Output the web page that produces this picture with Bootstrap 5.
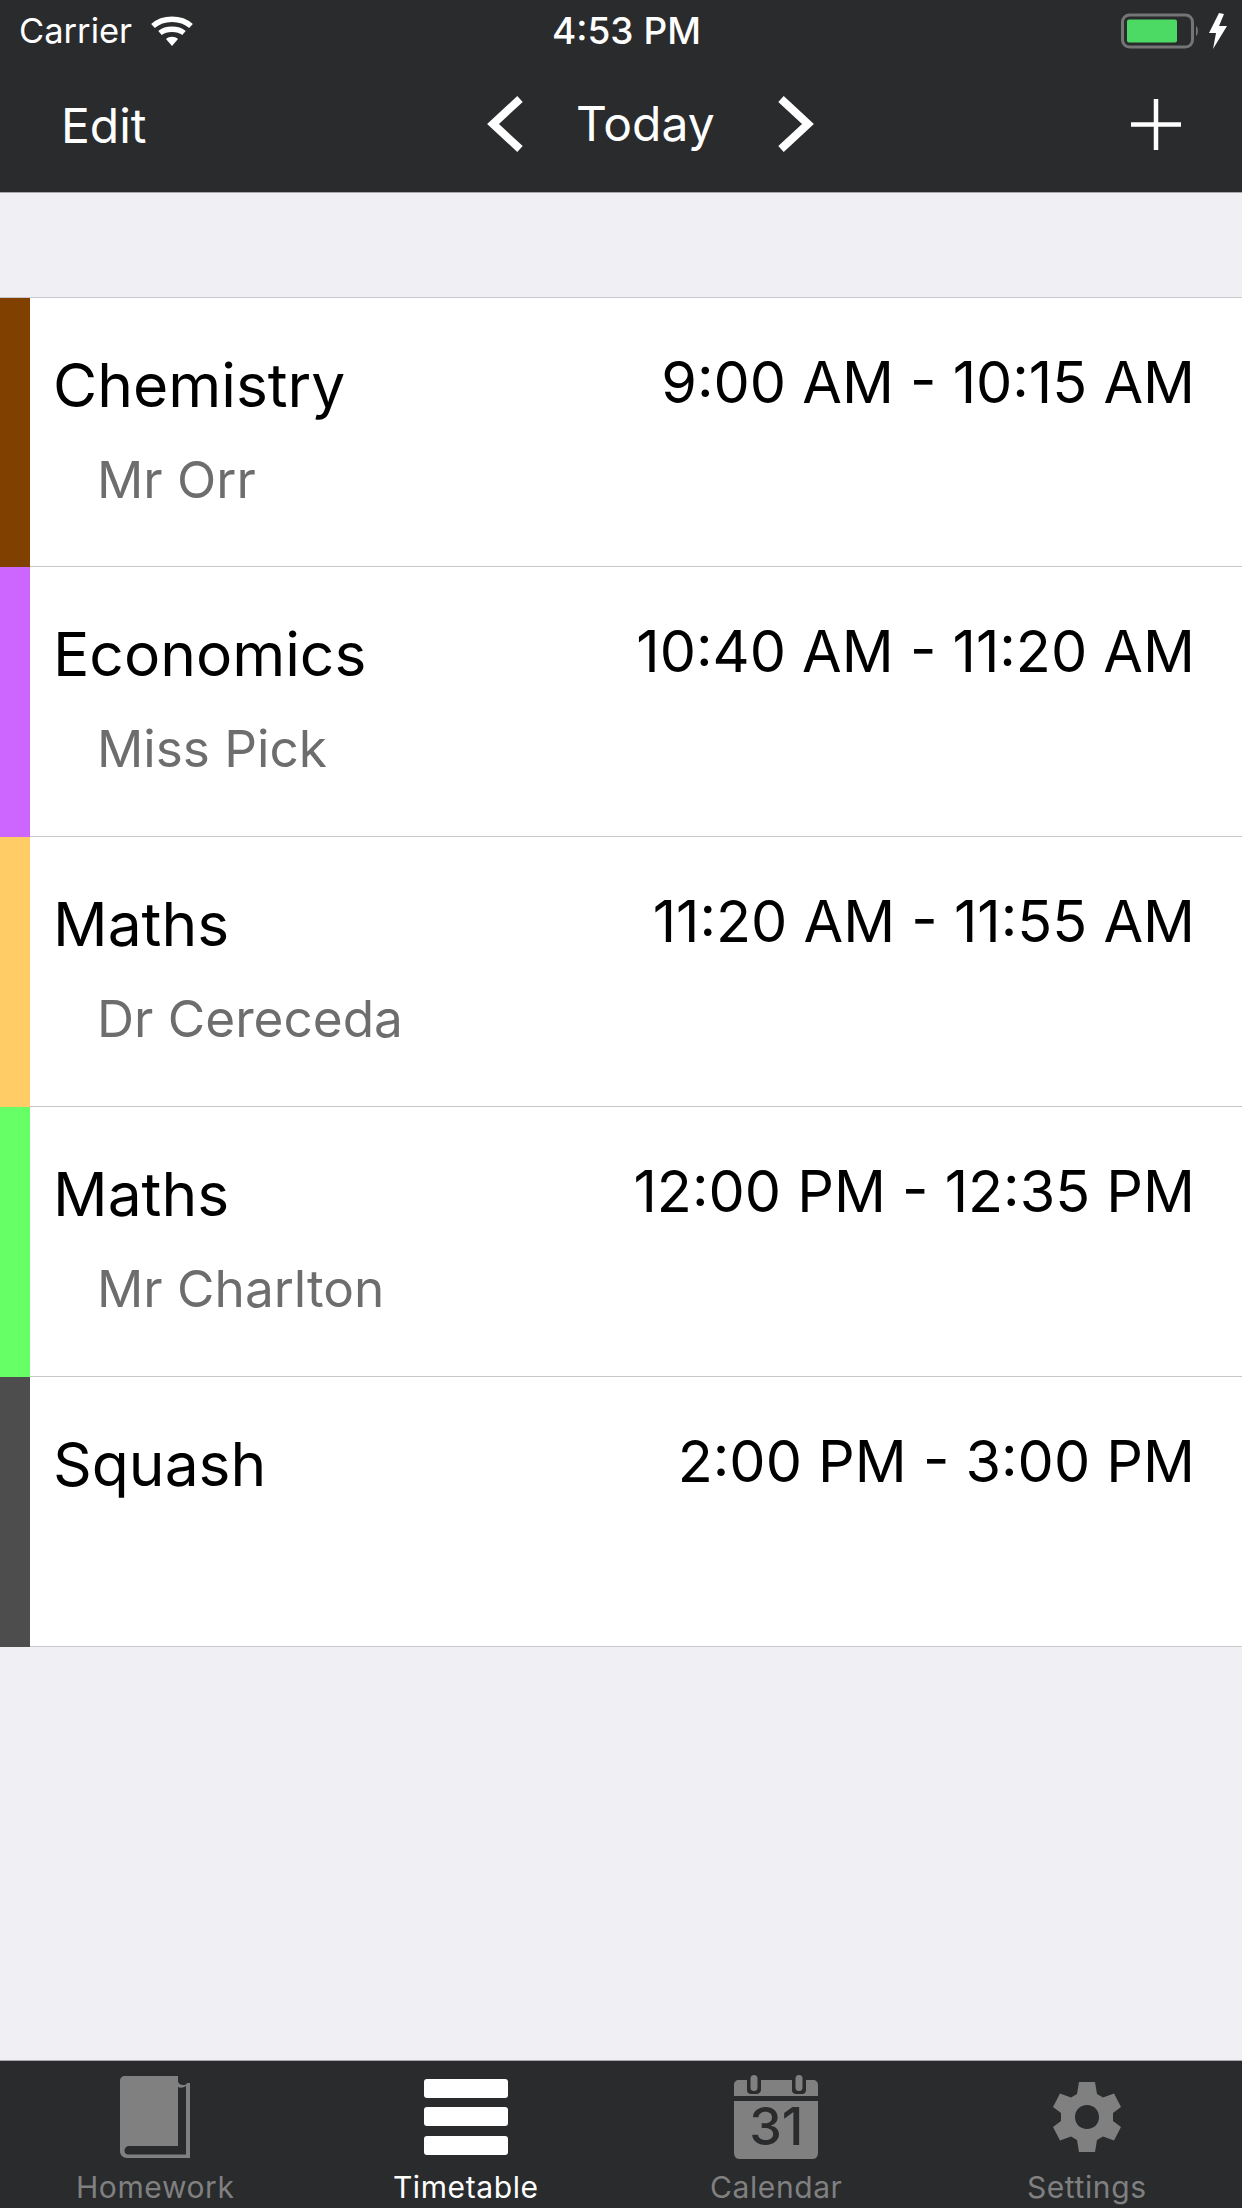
<!DOCTYPE html>
<html lang="en">
<head>
<meta charset="utf-8">
<title>Timetable</title>
<link href="https://cdn.jsdelivr.net/npm/bootstrap@5.3.0/dist/css/bootstrap.min.css" rel="stylesheet">
<style>
html, body { height: 100%; }
body { background: #efeff4; font-family: Inter, "Liberation Sans", sans-serif; }
.app-shell { height: 2208px; }
.top-bar { background: #2a2b2d; height: 193px; border-bottom: 1px solid #a9a9ad; color: #fff; }
.status-line { height: 62px; padding: 0 13px 0 19px; font-size: 34.5px; }
.carrier-text { width: 112px; margin-right: 20px; }
.clock-text { margin-left: 359px; font-size: 37px; font-weight: 500; width: 148px; white-space: nowrap; }
.nav-line { height: 130px; font-size: 48px; padding-bottom: 6px; }
.nav-text { margin-top: 4px; }
.edit-text { margin-left: 61px; width: 85px; }
.today-text { width: 133px; margin: 0 68px 0 52px; text-align: center; }
.prev-mark { margin-left: 341px; }
.plus-mark { margin-left: 317px; }
.gap-band { height: 104px; }
.day-list { --bs-list-group-bg: #fff; border-radius: 0; }
.day-list > .lesson-item { height: 270px; padding: 0; border-color: #c8c7cc; border-radius: 0; }
.day-list > .lesson-item:first-child { border-top-width: 1px; }
.day-list > .lesson-item:last-child { border-bottom-width: 1px; }
.stripe-bar { width: 30px; margin-bottom: -1px; flex-shrink: 0; }
.lesson-body { padding: 49px 47px 0 23px; }
.subject-name { font-size: 60.5px; line-height: 74px; color: #000; margin-top: 1px; }
.teacher-name { font-size: 51.300px; line-height: 60px; color: #6d6d6d; padding-left: 44px; margin-top: 27px; }
.time-range { font-size: 57.5px; line-height: 70px; color: #000; white-space: nowrap; }
.tab-strip { background: #2a2b2d; height: 148px; border-top: 1px solid #a9a9ad; }
.tab-entry { width: 25%; color: #808080; font-size: 30px; letter-spacing: .6px; height: 147px; padding-top: 4px; }
.tab-entry.is-active { color: #fff; }
.tab-glyph { height: 104px; }
.tab-caption { line-height: 36px; }
.date-number { position: absolute; left: 0; right: 0; bottom: 6px; text-align: center; font-size: 52px; line-height: 1; font-weight: 500; letter-spacing: 0; color: #2a2b2d; }
</style>
</head>
<body>
<div class="app-shell d-flex flex-column">
  <header class="top-bar flex-shrink-0">
    <div class="status-line d-flex align-items-center">
      <span class="carrier-text">Carrier</span>
      <svg width="42" height="30" viewBox="0 0 42 30"><g fill="none" stroke="#fff" stroke-width="5.5"><path d="M2 10C12 1 30 1 40 10"/><path d="M9 17C15 12 27 12 33 17"/></g><path d="M15 23C18 20 24 20 27 23L21 30Z" fill="#fff"/></svg>
      <span class="clock-text">4:53 PM</span>
      <svg class="ms-auto" width="108" height="36" viewBox="0 0 108 36">
        <rect x="1.5" y="2" width="70" height="32" rx="7" fill="none" stroke="#757575" stroke-width="3"/>
        <rect x="6" y="6.500" width="50" height="23" rx="2" fill="#4cd964"/>
        <path d="M75 13C77.500 14 77.500 22 75 23Z" fill="#757575"/>
        <path d="M98 0L88 20H95L92 36L106 13H98L103 1Z" fill="#fff"/>
      </svg>
    </div>
    <div class="nav-line d-flex align-items-center">
      <span class="nav-text edit-text">Edit</span>
      <svg class="prev-mark" width="37" height="56" viewBox="0 0 37 56"><path d="M33 3L6 28L33 53" fill="none" stroke="#fff" stroke-width="8"/></svg>
      <span class="nav-text today-text">Today</span>
      <svg width="37" height="56" viewBox="0 0 37 56"><path d="M4 3L31 28L4 53" fill="none" stroke="#fff" stroke-width="8"/></svg>
      <svg class="plus-mark" width="50" height="51" viewBox="0 0 50 51"><path d="M25 0V51M0 25.500H50" stroke="#fff" stroke-width="4.500"/></svg>
    </div>
  </header>
  <div class="gap-band flex-shrink-0"></div>
  <ul class="list-group list-group-flush day-list flex-shrink-0">
    <li class="list-group-item lesson-item d-flex">
      <div class="stripe-bar" style="background:#804000"></div>
      <div class="lesson-body d-flex flex-grow-1 justify-content-between">
        <div><div class="subject-name">Chemistry</div><div class="teacher-name">Mr Orr</div></div>
        <div class="time-range">9:00 AM - 10:15 AM</div>
      </div>
    </li>
    <li class="list-group-item lesson-item d-flex">
      <div class="stripe-bar" style="background:#cc66ff"></div>
      <div class="lesson-body d-flex flex-grow-1 justify-content-between">
        <div><div class="subject-name">Economics</div><div class="teacher-name">Miss Pick</div></div>
        <div class="time-range">10:40 AM - 11:20 AM</div>
      </div>
    </li>
    <li class="list-group-item lesson-item d-flex">
      <div class="stripe-bar" style="background:#ffcc66"></div>
      <div class="lesson-body d-flex flex-grow-1 justify-content-between">
        <div><div class="subject-name">Maths</div><div class="teacher-name">Dr Cereceda</div></div>
        <div class="time-range">11:20 AM - 11:55 AM</div>
      </div>
    </li>
    <li class="list-group-item lesson-item d-flex">
      <div class="stripe-bar" style="background:#66ff66"></div>
      <div class="lesson-body d-flex flex-grow-1 justify-content-between">
        <div><div class="subject-name">Maths</div><div class="teacher-name">Mr Charlton</div></div>
        <div class="time-range">12:00 PM - 12:35 PM</div>
      </div>
    </li>
    <li class="list-group-item lesson-item d-flex">
      <div class="stripe-bar" style="background:#4d4d4d"></div>
      <div class="lesson-body d-flex flex-grow-1 justify-content-between">
        <div><div class="subject-name">Squash</div></div>
        <div class="time-range">2:00 PM - 3:00 PM</div>
      </div>
    </li>
  </ul>
  <div class="flex-grow-1"></div>
  <nav class="tab-strip d-flex flex-shrink-0">
    <div class="tab-entry d-flex flex-column align-items-center">
      <div class="tab-glyph d-flex align-items-center">
        <svg width="70" height="82" viewBox="0 0 70 82"><path d="M5 0H58V5C58 10 67 10 67 7H70V82H7C3 82 0 79 0 75V5C0 2 2 0 5 0ZM58 11V70H9C4 70 2.500 78 8 78.500H66V10C63 12 60 12 58 11Z" fill="#808080" fill-rule="evenodd"/></svg>
      </div>
      <div class="tab-caption">Homework</div>
    </div>
    <div class="tab-entry is-active d-flex flex-column align-items-center">
      <div class="tab-glyph d-flex align-items-center">
        <svg width="84" height="76" viewBox="0 0 84 76"><rect width="84" height="19" rx="3" fill="#fff"/><rect y="28" width="84" height="19" rx="3" fill="#fff"/><rect y="57" width="84" height="19" rx="3" fill="#fff"/></svg>
      </div>
      <div class="tab-caption">Timetable</div>
    </div>
    <div class="tab-entry d-flex flex-column align-items-center">
      <div class="tab-glyph d-flex align-items-center">
        <div class="position-relative">
          <svg class="d-block" width="84" height="84" viewBox="0 0 84 84">
            <path d="M5 5H13V15C13 18 15 19 18 19H22C25 19 27 17 27 15V5H58V15C58 18 60 19 63 19H68C71 19 72 17 72 15V5H79C82 5 84 7 84 10V21H0V10C0 7 2 5 5 5Z" fill="#808080"/>
            <rect x="16.500" y="0" width="7" height="16" rx="3.500" fill="#808080"/>
            <rect x="61.500" y="0" width="7" height="16" rx="3.500" fill="#808080"/>
            <path d="M0 26H84V78C84 81 82 84 79 84H5C2 84 0 81 0 78Z" fill="#808080"/>
          </svg>
          <span class="date-number">31</span>
        </div>
      </div>
      <div class="tab-caption">Calendar</div>
    </div>
    <div class="tab-entry d-flex flex-column align-items-center">
      <div class="tab-glyph d-flex align-items-center">
        <svg width="68" height="70" viewBox="0 0 68 70"><path d="M26 0H42L44 12L50 15.500L61 11.500L68 25L60 31V39L68 45L61 58.500L50 54.500L44 58L42 70H26L24 58L18 54.500L7 58.500L0 45L8 39V31L0 25L7 11.500L18 15.500L24 12ZM34 23C27 23 22 28 22 35C22 42 27 47 34 47C41 47 46 42 46 35C46 28 41 23 34 23Z" fill="#808080" fill-rule="evenodd"/></svg>
      </div>
      <div class="tab-caption">Settings</div>
    </div>
  </nav>
</div>
<script src="https://cdn.jsdelivr.net/npm/bootstrap@5.3.0/dist/js/bootstrap.bundle.min.js"></script>
</body>
</html>
